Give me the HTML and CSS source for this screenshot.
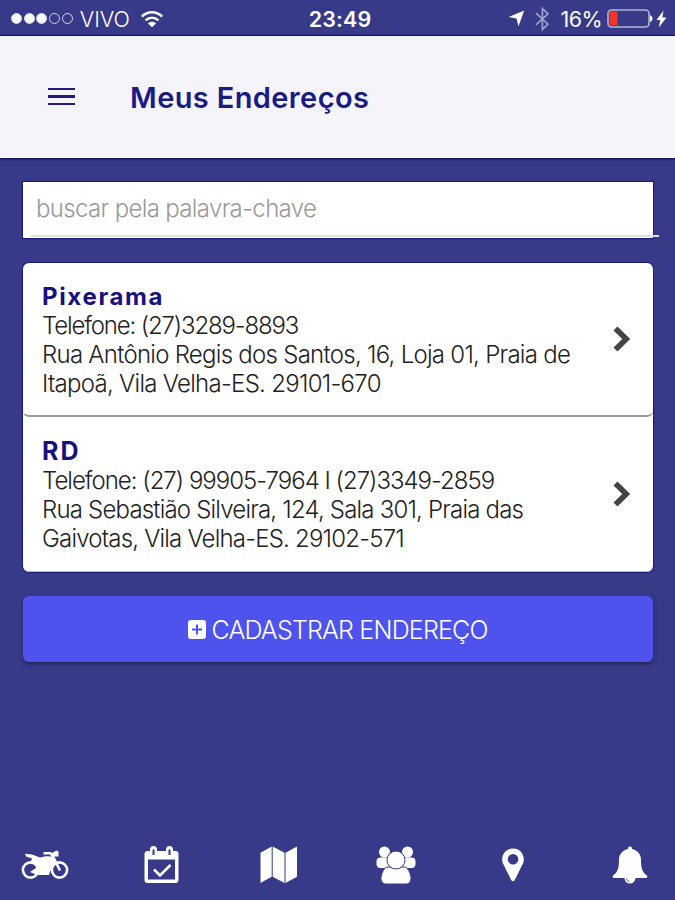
FILE: index.html
```html
<!DOCTYPE html>
<html lang="pt-BR">
<head>
  <meta charset="UTF-8" />
  <meta name="viewport" content="width=device-width, initial-scale=1" />
  <title>Meus Endereços</title>
  <link rel="stylesheet" href="styles.css">
</head>
<body>
  <div class="status-bar">
    <div class="status-left">
      <div class="signal">
        <i class="dot full"></i><i class="dot full"></i><i class="dot full"></i><i class="dot"></i><i class="dot"></i>
      </div>
      <span class="carrier">VIVO</span>
      <svg class="wifi" width="24" height="18" viewBox="0 0 24 18">
        <path d="M1.8 6.6C7.8 .9 16.2 .9 22.2 6.6M5.5 10.4c4-3.6 9-3.6 13 0" fill="none" stroke="#fff" stroke-width="2.5"/>
        <path d="M12 17.2L7.8 13.2c2.4-2.1 6-2.1 8.4 0z" fill="#fff"/>
      </svg>
    </div>
    <span class="clock">23:49</span>
    <div class="status-right">
      <svg width="17" height="17" viewBox="0 0 17 17"><path d="M16.2 .6L10.4 16.4 8.6 8.6.6 7z" fill="#fff"/></svg>
      <svg class="bluetooth" width="15" height="24" viewBox="0 0 15 24">
        <path d="M1 6.2L13 17.2 7.4 22.4V1.6L13 6.8 1 17.8" fill="none" stroke="#9ea0cd" stroke-width="1.7"/>
      </svg>
      <span class="percent">16%</span>
      <svg class="battery" width="46" height="20" viewBox="0 0 46 20">
        <rect x="1" y="1" width="41" height="17" rx="3.5" fill="none" stroke="#b3b4d8" stroke-width="1.6"/>
        <rect x="2.5" y="2.5" width="8" height="14" rx="1" fill="#f5352b"/>
        <path d="M43 6q2.5 1 2.5 3.500t-2.5 3.500z" fill="#fff"/>
      </svg>
      <svg class="bolt" width="11" height="18" viewBox="0 0 11 18"><path d="M7.500 .5L.5 10h3.800L2.800 17.500 10.500 7.500H6.400z" fill="#fff"/></svg>
    </div>
  </div>

  <header class="toolbar">
    <button class="menu-btn" aria-label="Menu"><i></i><i></i><i></i></button>
    <h1>Meus Endereços</h1>
  </header>

  <main class="content">
    <div class="search">
      <input type="text" placeholder="buscar pela palavra-chave" />
    </div>

    <div class="list">
      <div class="card">
        <div class="info">
          <h2>Pixerama</h2>
          <p class="phone">Telefone: (27)3289-8893</p>
          <p class="street">Rua Antônio Regis dos Santos, 16, Loja 01, Praia de</p>
          <p class="city">Itapoã, Vila Velha-ES. 29101-670</p>
        </div>
        <svg width="18" height="26" viewBox="0 0 18 26"><path d="M2.500 2.600L13.200 13 2.500 23.400" fill="none" stroke="#444" stroke-width="5.600"/></svg>
      </div>
      <div class="card">
        <div class="info">
          <h2>RD</h2>
          <p class="phone">Telefone: (27) 99905-7964 I (27)3349-2859</p>
          <p class="street">Rua Sebastião Silveira, 124, Sala 301, Praia das</p>
          <p class="city">Gaivotas, Vila Velha-ES. 29102-571</p>
        </div>
        <svg width="18" height="26" viewBox="0 0 18 26"><path d="M2.500 2.600L13.200 13 2.500 23.400" fill="none" stroke="#444" stroke-width="5.600"/></svg>
      </div>
    </div>

    <button class="add-btn">
      <svg width="18" height="19" viewBox="0 0 18 19">
        <rect width="18" height="19" rx="3" fill="#fff"/>
        <path d="M9 4.500v10M4 9.500h10" stroke="#4e53ee" stroke-width="2"/>
      </svg>
      <span>CADASTRAR ENDEREÇO</span>
    </button>
  </main>

  <nav class="tabs">
    <a><svg width="48" height="30" viewBox="0 0 48 30" fill="#fff">
      <g fill="none" stroke="#fff" stroke-width="2.600">
        <circle cx="9.500" cy="20" r="7.600"/>
        <circle cx="38.500" cy="20" r="7.600"/>
        <path d="M39 20.500L32 6.500 29.500 3.200H22.500" stroke-linejoin="round"/>
      </g>
      <path d="M4 3.800l7 .8 8 3 6-1.400 6 .4 3.500 6-4 5-2.500 7.500H16L9 22l6-4-1-4.500-4-2.500 1-2.500-6-2z"/>
      <path d="M31 3l4.500-2.500 2 1v5l-5.500 0z"/>
    </svg></a>
    <a><svg width="36" height="38" viewBox="0 0 36 38">
      <path fill="#fff" fill-rule="evenodd" d="M3 5h3V3.500a3.500 3.500 0 0 1 7 0V5h9V3.500a3.500 3.500 0 0 1 7 0V5h2.500a3 3 0 0 1 3 3v26a3 3 0 0 1-3 3H3.500a3 3 0 0 1-3-3V8a3 3 0 0 1 2.500-3zM4 13.500v20h27v-20zM8.500 3.500V9h2V3.500zM24.500 3.500V9h2V3.500z"/>
      <path d="M10 23.500l6 6L26.500 19" fill="none" stroke="#fff" stroke-width="2.600"/>
    </svg></a>
    <a><svg width="38" height="38" viewBox="0 0 38 38" fill="#fff">
      <path d="M.5 6.800L11.700 .5v30.200L.5 37zM12.700 .5l11.800 6.300V37L12.700 30.700zM25.500 6.800L37 .5v30.200L25.500 37z"/>
    </svg></a>
    <a><svg width="40" height="38" viewBox="0 0 40 38" fill="#fff">
      <circle cx="8.500" cy="6" r="5.500"/><circle cx="31.500" cy="6" r="5.500"/>
      <rect x=".5" y="11.500" width="15" height="10.500" rx="4"/><rect x="24.500" y="11.500" width="15" height="10.500" rx="4"/>
      <g stroke="#373989" stroke-width="1">
        <path d="M11 21h18c3.500 1.500 6 7 6 11.500a5 5 0 0 1-5.500 5.500h-19A5 5 0 0 1 5 32.500C5 28 7.500 22.500 11 21z"/>
        <circle cx="20" cy="14" r="9"/>
      </g>
    </svg></a>
    <a><svg width="24" height="34" viewBox="0 0 24 34">
      <path fill="#fff" fill-rule="evenodd" d="M12 .5C5.800 .5 1.200 5.200 1.200 11.200c0 2 .4 3.500 1.200 5.100l7.800 15.800c.8 1.600 2.800 1.600 3.600 0l7.800-15.800c.8-1.600 1.200-3.100 1.200-5.100C22.800 5.200 18.200 .5 12 .5zM12 6a5.300 5.300 0 1 1 0 10.600A5.300 5.300 0 0 1 12 6z"/>
    </svg></a>
    <a><svg width="36" height="38" viewBox="0 0 36 38">
      <path fill="#fff" d="M18 .5c1.300 0 2 .8 2 2.400C25.500 4 29 8.200 29 13.500c0 8 1 12.500 6 16 .8 1 .3 2.500-1 2.500H23.500a5.500 5.500 0 0 1-11 0H2c-1.300 0-1.800-1.500-1-2.500 5-3.500 6-8 6-16C7 8.200 10.500 4 16 2.900 16 1.300 16.700 .5 18 .5z"/>
      <path d="M14.500 32.500a3.500 3.500 0 0 0 3 3" fill="none" stroke="#373989" stroke-width=".8"/>
    </svg></a>
  </nav>
</body>
</html>
```

FILE: styles.css
```css
* {
  box-sizing: border-box;
}
body {
  font-family: Inter, "Liberation Sans", sans-serif;
  background-color: #373989;
  display: flex;
  flex-direction: column;
  height: 100vh;
  margin: 0;
  color: #222;
  overflow: hidden;
}
svg {
  display: block;
  flex: none;
}
h1, h2, p {
  margin: 0;
  white-space: nowrap;
}
button {
  font-family: inherit;
  border: none;
  cursor: pointer;
}

/* status bar */
.status-bar {
  display: grid;
  grid-template-columns: 1fr auto 1fr;
  align-items: center;
  height: 36px;
  padding: 1px 8px 0 11px;
  color: white;
  font-size: 21.5px;
}
.status-left, .status-right {
  display: flex;
  align-items: center;
}
.status-right {
  justify-content: flex-end;
}
.signal {
  display: flex;
  gap: 1.7px;
}
.dot {
  width: 11px;
  height: 11px;
  border: 1px solid #d5d6ec;
  border-radius: 50%;
}
.dot.full {
  background: white;
}
.carrier {
  margin-left: 7px;
  font-weight: 300;
}
.wifi {
  margin-left: 10px;
}
.clock {
  padding-left: 2px;
  font-weight: 600;
  letter-spacing: 0.1px;
}
.bluetooth {
  margin-left: 10px;
}
.percent {
  margin-left: 11px;
  letter-spacing: -0.6px;
}
.battery {
  margin-left: 5px;
}
.bolt {
  margin-left: 3px;
}

/* toolbar */
.toolbar {
  display: flex;
  align-items: center;
  height: 122px;
  padding-left: 48px;
  background-color: #f4f4fa;
  border-bottom: 1px solid white;
  box-shadow: 0 1px 2px #05064f, 0 -1px 1px #17186d;
}
.menu-btn {
  display: flex;
  flex-direction: column;
  gap: 5px;
  width: 27px;
  padding: 0;
  background: transparent;
}
.menu-btn i {
  height: 2.5px;
  background: #1d1b80;
}
.toolbar h1 {
  margin-left: 55px;
  padding-top: 2px;
  font-size: 29px;
  font-weight: 600;
  letter-spacing: 0.38px;
  line-height: 36px;
  color: #1b1b83;
}

/* content */
.content {
  flex: 1;
  padding: 24px 22px 0 23px;
}
.search {
  display: flex;
  height: 56px;
  background: white;
  box-shadow: 0 0 1px 1px #1b1b7b;
}
.search input {
  flex: none;
  width: 628px;
  height: 55px;
  margin-left: 8px;
  padding: 0 5px 1px;
  border: none;
  border-bottom: 2px solid #dedede;
  background: transparent;
  font-family: inherit;
  font-size: 24px;
  font-weight: 300;
  letter-spacing: -0.65px;
  outline: none;
}
.search input::placeholder {
  color: #999;
}
.list {
  margin-top: 25px;
  border-radius: 6px;
  background: white;
  box-shadow: 0 0 1px 1px #1b1b7b;
}
.card {
  display: flex;
  justify-content: space-between;
  height: 154px;
  padding: 19px 22px 0 19px;
  border-bottom: 2px solid #999;
  border-radius: 6px;
}
.card + .card {
  height: 155px;
  padding-top: 20px;
  border-bottom: 1px solid #b5b5b5;
}
.card svg {
  margin-top: 44px;
}
.info {
  font-size: 24px;
  font-weight: 300;
  line-height: 29px;
}
.info h2 {
  font-size: 24px;
  font-weight: 700;
  letter-spacing: 1.65px;
  color: #17117e;
}
.phone {
  letter-spacing: -1.15px;
}
.street {
  letter-spacing: -0.73px;
}
.city {
  letter-spacing: -0.72px;
}
.card + .card h2 {
  font-size: 25px;
  letter-spacing: 2.2px;
}
.card + .card .phone {
  letter-spacing: -1px;
}
.card + .card .street {
  letter-spacing: -0.81px;
}
.card + .card .city {
  letter-spacing: -0.8px;
}
.add-btn {
  display: flex;
  justify-content: center;
  align-items: center;
  gap: 5px;
  width: 100%;
  height: 66px;
  margin-top: 24px;
  padding-top: 2px;
  border-radius: 6px;
  background-color: #4e53ee;
  box-shadow: 0 2px 4px rgba(0,0,0,0.4);
  color: white;
  font-size: 25px;
  font-weight: 300;
  letter-spacing: -0.8px;
  white-space: nowrap;
}

/* bottom tabs */
.tabs {
  display: flex;
  justify-content: space-between;
  height: 70px;
  padding: 0 21px;
}
.tabs a {
  display: flex;
  justify-content: center;
  align-items: center;
  width: 48px;
}
```
